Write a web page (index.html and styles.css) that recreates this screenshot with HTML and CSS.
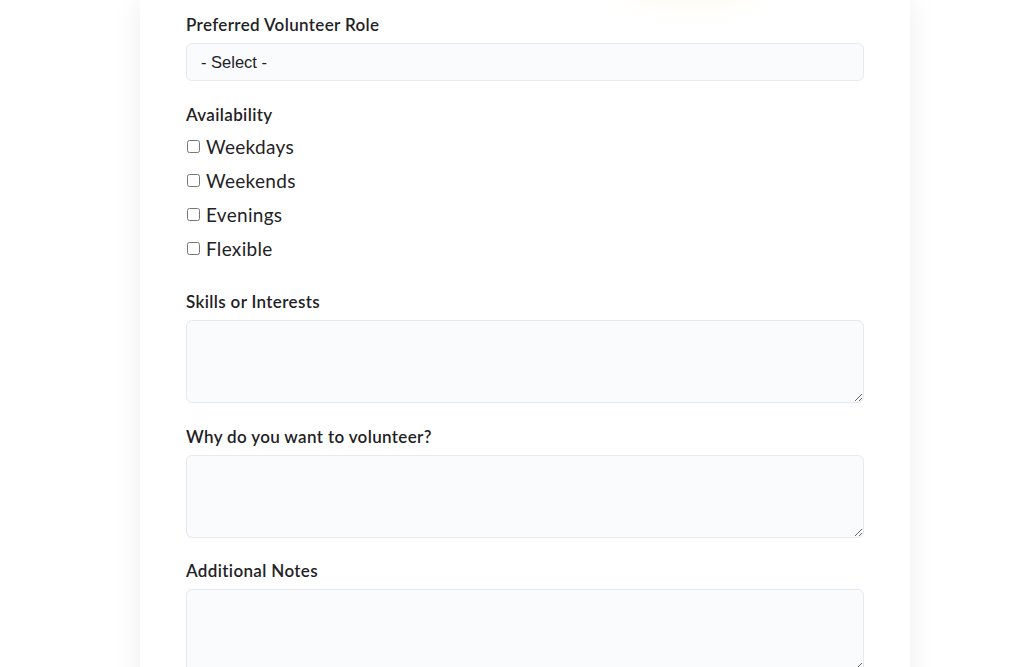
FILE: index.html
```html
<!DOCTYPE html>
<html lang="en">
<head>
<meta charset="utf-8">
<title>Volunteer Form</title>
<link rel="stylesheet" href="styles.css">
</head>
<body>
<div class="page">
  <div class="card">
    <div class="glow"></div>
    <form class="form">
      <div class="group">
        <label class="label" for="role">Preferred Volunteer Role</label>
        <select id="role" class="select">
          <option>- Select -</option>
        </select>
      </div>
      <div class="group">
        <div class="label">Availability</div>
        <div class="checks">
          <label class="check"><input type="checkbox"> Weekdays</label>
          <label class="check"><input type="checkbox"> Weekends</label>
          <label class="check"><input type="checkbox"> Evenings</label>
          <label class="check"><input type="checkbox"> Flexible</label>
        </div>
      </div>
      <div class="group group-skills">
        <label class="label" for="skills">Skills or Interests</label>
        <textarea id="skills" class="area"></textarea>
      </div>
      <div class="group">
        <label class="label" for="why">Why do you want to volunteer?</label>
        <textarea id="why" class="area"></textarea>
      </div>
      <div class="group group-notes">
        <label class="label" for="notes">Additional Notes</label>
        <textarea id="notes" class="area"></textarea>
      </div>
    </form>
  </div>
</div>
</body>
</html>
```

FILE: styles.css
```css
html, body {
  margin: 0;
  padding: 0;
  background: #ffffff;
  overflow: hidden;
}
body {
  font-family: "Lato", "Open Sans", sans-serif;
  color: #1f2226;
}
.page {
  display: flex;
  padding-left: 140px;
}
.card {
  position: relative;
  width: 770px;
  min-height: 800px;
  background: #ffffff;
  box-shadow: 0 0 28px rgba(0, 0, 0, 0.07);
  padding: 12px 46px 40px 46px;
  box-sizing: border-box;
}
.glow {
  position: absolute;
  top: -40px;
  left: 485px;
  width: 130px;
  height: 40px;
  border-radius: 50%;
  box-shadow: 0 6px 24px rgba(240, 225, 160, 0.16);
}
.form {
  display: flex;
  flex-direction: column;
  gap: 22px;
}
.group {
  display: flex;
  flex-direction: column;
}
.label {
  display: block;
  font-size: 17px;
  font-weight: 600;
  letter-spacing: 0.35px;
  line-height: 24px;
  margin-bottom: 6px;
  color: #1f2226;
}
.group:first-child .label {
  margin-top: 1px;
}
.select {
  appearance: none;
  -webkit-appearance: none;
  height: 38px;
  border: 1px solid #e6eaee;
  border-radius: 6px;
  background: #f9fbfd;
  padding: 0 14px;
  font-family: "Liberation Sans", Arial, sans-serif;
  font-size: 16.5px;
  color: #1f2226;
}
.checks {
  display: flex;
  flex-direction: column;
  margin-top: -4px;
}
.check {
  display: flex;
  align-items: center;
  height: 34px;
  font-size: 19px;
  letter-spacing: 0.3px;
  color: #1f2226;
}
.check input {
  margin: 0 6px 0 1px;
  width: 13px;
  height: 13px;
}
.area {
  height: 83px;
  border: 1px solid #e6eaee;
  border-radius: 6px;
  background: #f9fbfd;
  box-sizing: border-box;
  resize: vertical;
  font-family: inherit;
}
.group-skills {
  margin-top: 3px;
}
.group-notes {
  margin-top: -1px;
}
```
